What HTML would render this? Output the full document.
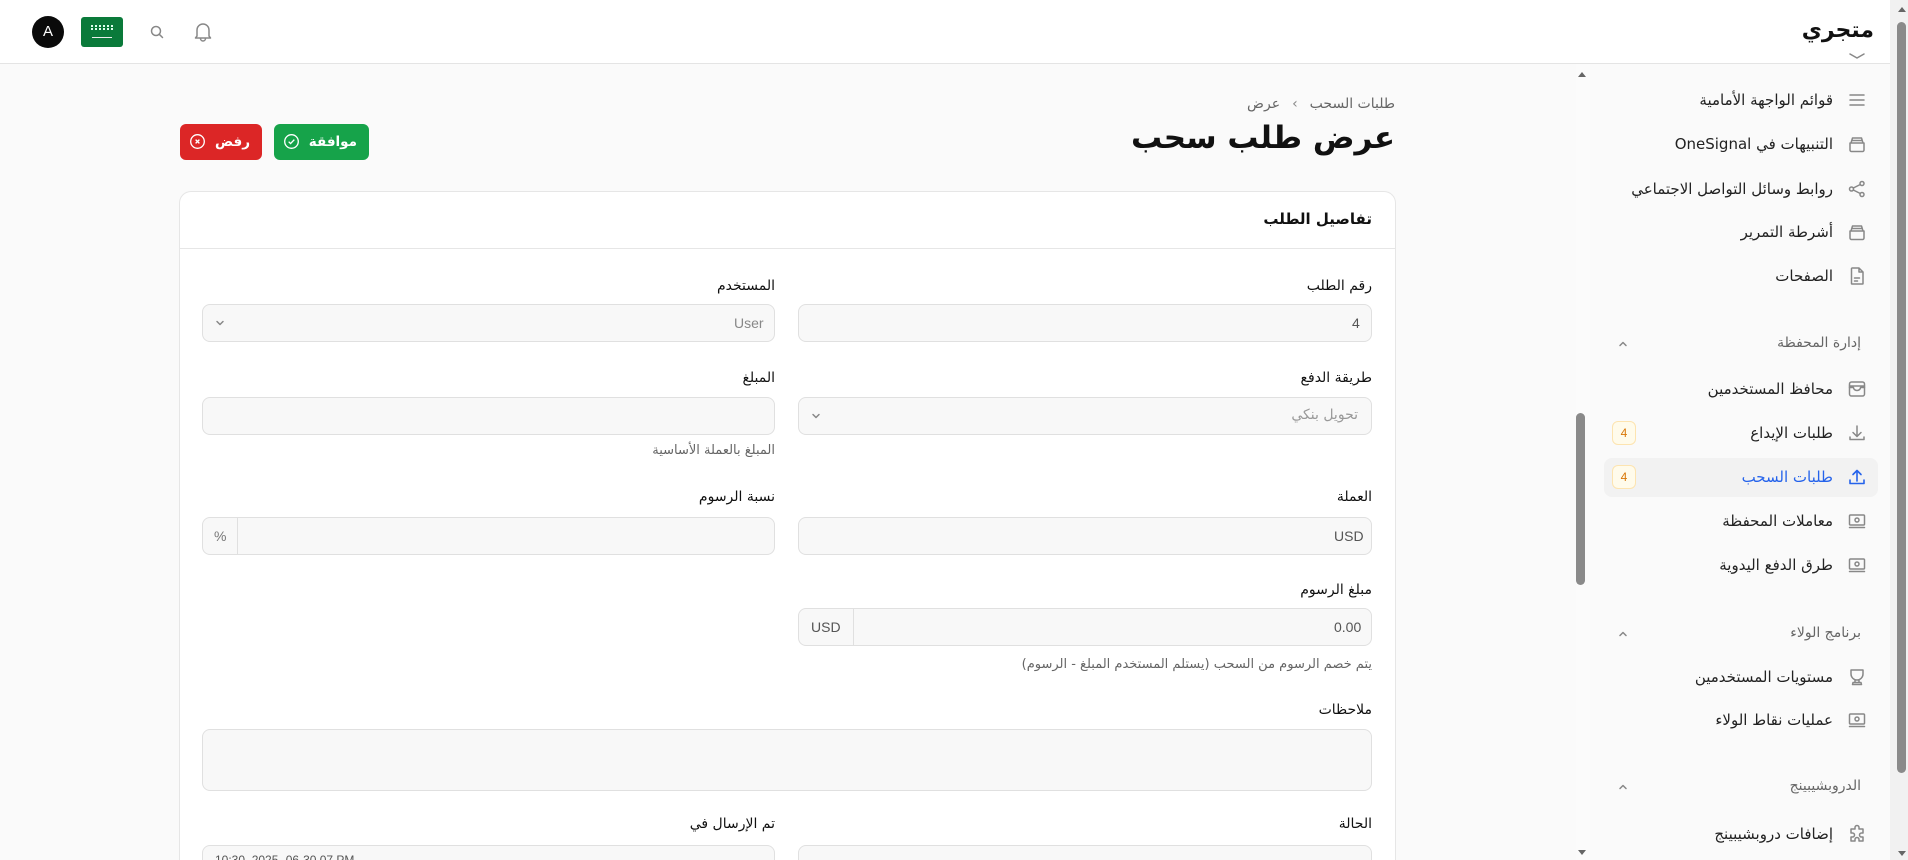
<!DOCTYPE html>
<html><head><meta charset="utf-8"><style>
*{box-sizing:border-box;margin:0;padding:0}
html,body{width:1908px;height:860px;overflow:hidden;background:#fafafa;font-family:"DejaVu Sans","Liberation Sans",sans-serif;color:#111}
.wrap{position:relative;width:1908px;height:860px;overflow:hidden}
.a{position:absolute}
.top{left:0;top:0;width:1890px;height:64px;background:#fff;border-bottom:1px solid #e4e4e4}
.rt{direction:rtl;text-align:right;white-space:nowrap}
.lbl{font-size:14px;color:#111}
.inp{background:#f8f8f8;border:1px solid #e0e0e0;border-radius:8px;height:38px}
.ph{font-size:14px;color:#777}
.help{font-size:13px;color:#666}
.si{font-size:15px;color:#222}
.grp{font-size:14px;color:#666}
.ic{stroke:#888;fill:none;stroke-width:1.5;stroke-linecap:round;stroke-linejoin:round}
.badge{width:24px;height:24px;border:1px solid #fde4b0;background:#fffbeb;border-radius:6px;color:#d97706;font-size:12px;text-align:center;line-height:22px;font-family:"Liberation Sans",sans-serif}
</style></head><body><div class="wrap">
<!-- top bar -->
<div class="a top"></div>
<div class="a" style="left:32px;top:16px;width:32px;height:32px;border-radius:50%;background:#0a0a0a;color:#fff;font:15px 'Liberation Sans',sans-serif;text-align:center;line-height:32px">A</div>
<div class="a" style="left:81px;top:17px;width:42px;height:30px;border-radius:3px;background:#0a7a3a"><div class="a" style="left:10px;top:8px;width:22px;height:5px;border-top:2px dotted #dfe;border-bottom:2px dotted #dfe"></div><div class="a" style="left:11px;top:20px;width:20px;height:1px;background:#eee"></div></div>
<svg class="a" style="left:149px;top:24px" width="16" height="16" viewBox="0 0 16 16"><circle cx="7" cy="7" r="4.5" class="ic" stroke-width="1.2"/><path d="M10.3 10.3L13.5 13.5" class="ic" stroke-width="1.2"/></svg>
<svg class="a" style="left:193px;top:21px" width="20" height="22" viewBox="0 0 20 22"><path d="M4 15V9a6 6 0 0 1 12 0v6l1.5 2h-15z M7.5 17.5a2.5 2.5 0 0 0 5 0" class="ic" stroke-width="1.3"/></svg>
<div class="a rt" style="right:34px;top:18px;font-size:22px;font-weight:bold;color:#111">متجري</div>

<!-- breadcrumb/title -->
<div class="a rt" style="right:513px;top:96px;font-size:14px;color:#666">طلبات السحب<span style="margin:0 12px;color:#888">›</span>عرض</div>
<div class="a rt" style="right:513px;top:120px;font-size:31px;font-weight:bold;color:#111">عرض طلب سحب</div>
<div class="a rt" style="left:274px;top:124px;width:95px;height:36px;background:#16a34a;border-radius:6px;color:#fff;font-size:13.5px;font-weight:bold;line-height:36px;padding-right:12px">موافقة <svg style="vertical-align:-4px;margin-right:4px" width="17" height="17" viewBox="0 0 18 18"><circle cx="9" cy="9" r="7.2" fill="none" stroke="#fff" stroke-width="1.4"/><path d="M6 9.2l2 2 4-4.2" fill="none" stroke="#fff" stroke-width="1.4"/></svg></div>
<div class="a rt" style="left:180px;top:124px;width:82px;height:36px;background:#dc2626;border-radius:6px;color:#fff;font-size:13.5px;font-weight:bold;line-height:36px;padding-right:12px">رفض <svg style="vertical-align:-4px;margin-right:4px" width="17" height="17" viewBox="0 0 18 18"><circle cx="9" cy="9" r="7.2" fill="none" stroke="#fff" stroke-width="1.4"/><path d="M7 7l4 4M11 7l-4 4" fill="none" stroke="#fff" stroke-width="1.4"/></svg></div>

<!-- card -->
<div class="a" style="left:179px;top:191px;width:1217px;height:669px;background:#fff;border:1px solid #e6e6e6;border-bottom:none;border-radius:12px 12px 0 0"></div>
<div class="a" style="left:180px;top:248px;width:1215px;height:1px;background:#e6e6e6"></div>
<div class="a rt" style="right:536px;top:210px;font-size:15px;font-weight:bold">تفاصيل الطلب</div>

<!-- right column -->
<div class="a rt lbl" style="right:536px;top:278px">رقم الطلب</div>
<div class="a inp" style="left:798px;top:304px;width:574px"></div>
<div class="a ph" style="left:1352px;top:315px;font-family:'Liberation Sans';color:#555">4</div>

<div class="a rt lbl" style="right:536px;top:370px">طريقة الدفع</div>
<div class="a inp" style="left:798px;top:397px;width:574px"></div>
<div class="a rt ph" style="right:550px;top:407px;color:#999">تحويل بنكي</div>
<svg class="a" style="left:810px;top:410px" width="12" height="12" viewBox="0 0 12 12"><path d="M3 4.5l3 3 3-3" class="ic"/></svg>

<div class="a rt lbl" style="right:536px;top:489px">العملة</div>
<div class="a inp" style="left:798px;top:517px;width:574px"></div>
<div class="a ph" style="left:1334px;top:528px;font-family:'Liberation Sans';color:#555">USD</div>

<div class="a rt lbl" style="right:536px;top:582px">مبلغ الرسوم</div>
<div class="a inp" style="left:798px;top:608px;width:574px"></div>
<div class="a" style="left:853px;top:609px;width:1px;height:36px;background:#e0e0e0"></div>
<div class="a ph" style="left:811px;top:619px;font-family:'Liberation Sans';color:#555">USD</div>
<div class="a ph" style="left:1334px;top:619px;font-family:'Liberation Sans';color:#555">0.00</div>
<div class="a rt help" style="right:536px;top:657px">يتم خصم الرسوم من السحب (يستلم المستخدم المبلغ - الرسوم)</div>

<div class="a rt lbl" style="right:536px;top:702px">ملاحظات</div>
<div class="a inp" style="left:202px;top:729px;width:1170px;height:62px"></div>

<div class="a rt lbl" style="right:536px;top:816px">الحالة</div>
<div class="a inp" style="left:798px;top:845px;width:574px"></div>
<div class="a rt lbl" style="right:1133px;top:816px">تم الإرسال في</div>
<div class="a inp" style="left:202px;top:845px;width:573px"></div>
<div class="a" style="left:215px;top:853px;font:12px 'Liberation Sans';color:#555">10:30 ,2025 -06-30 07 PM</div>

<!-- left column -->
<div class="a rt lbl" style="right:1133px;top:278px">المستخدم</div>
<div class="a inp" style="left:202px;top:304px;width:573px"></div>
<div class="a ph" style="left:734px;top:315px;font-family:'Liberation Sans';color:#888">User</div>
<svg class="a" style="left:214px;top:317px" width="12" height="12" viewBox="0 0 12 12"><path d="M3 4.5l3 3 3-3" class="ic"/></svg>

<div class="a rt lbl" style="right:1133px;top:370px">المبلغ</div>
<div class="a inp" style="left:202px;top:397px;width:573px"></div>
<div class="a rt help" style="right:1133px;top:443px">المبلغ بالعملة الأساسية</div>

<div class="a rt lbl" style="right:1133px;top:489px">نسبة الرسوم</div>
<div class="a inp" style="left:202px;top:517px;width:573px"></div>
<div class="a" style="left:237px;top:518px;width:1px;height:36px;background:#e0e0e0"></div>
<div class="a ph" style="left:214px;top:528px;font-family:'Liberation Sans';color:#777">%</div>

<!-- inner scrollbar -->
<div class="a" style="left:1576px;top:64px;width:14px;height:796px;background:#fbfbfb"></div>
<div class="a" style="left:1578px;top:68px;width:0;height:0;border:4px solid transparent;border-bottom:5px solid #666"></div>
<div class="a" style="left:1576px;top:413px;width:9px;height:172px;background:#8a8a8a;border-radius:5px"></div>
<div class="a" style="left:1578px;top:850px;width:0;height:0;border:4px solid transparent;border-top:5px solid #666"></div>

<!-- sidebar -->
<div class="a" style="left:1590px;top:64px;width:300px;height:796px;background:#fafafa"></div>
<svg class="a" style="left:1848px;top:52px" width="18" height="12" viewBox="0 0 18 12"><path d="M2 2l7 4 7-4" class="ic"/></svg>

<svg class="a" style="left:1847px;top:90px" width="20" height="20" viewBox="0 0 20 20"><path d="M3 5h14M3 10h14M3 15h14" class="ic"/></svg>
<div class="a rt si" style="right:75px;top:91px">قوائم الواجهة الأمامية</div>
<svg class="a" style="left:1847px;top:134px" width="20" height="20" viewBox="0 0 20 20"><path d="M3 9h14v7a1.5 1.5 0 0 1-1.5 1.5h-11A1.5 1.5 0 0 1 3 16zM4 9l1.5-5h9L16 9M5 6.5h10" class="ic"/></svg>
<div class="a rt si" style="right:75px;top:135px">التنبيهات في OneSignal</div>
<svg class="a" style="left:1847px;top:179px" width="20" height="20" viewBox="0 0 20 20"><circle cx="15" cy="4.5" r="2" class="ic"/><circle cx="4.5" cy="10" r="2" class="ic"/><circle cx="15" cy="15.5" r="2" class="ic"/><path d="M6.3 9l7-3.5M6.3 11l7 3.5" class="ic"/></svg>
<div class="a rt si" style="right:75px;top:180px">روابط وسائل التواصل الاجتماعي</div>
<svg class="a" style="left:1847px;top:222px" width="20" height="20" viewBox="0 0 20 20"><path d="M3 9h14v7a1.5 1.5 0 0 1-1.5 1.5h-11A1.5 1.5 0 0 1 3 16zM4 9l1.5-5h9L16 9M5 6.5h10" class="ic"/></svg>
<div class="a rt si" style="right:75px;top:223px">أشرطة التمرير</div>
<svg class="a" style="left:1847px;top:266px" width="20" height="20" viewBox="0 0 20 20"><path d="M5 2h7l4 4v11.5a.5.5 0 0 1-.5.5h-10.5a.5.5 0 0 1-.5-.5V2.5zM12 2v4h4M7.5 12h5M7.5 15h3" class="ic"/></svg>
<div class="a rt si" style="right:75px;top:267px">الصفحات</div>

<div class="a rt grp" style="right:47px;top:335px">إدارة المحفظة</div>
<svg class="a" style="left:1617px;top:338px" width="12" height="12" viewBox="0 0 12 12"><path d="M3 7.5l3-3 3 3" class="ic"/></svg>

<svg class="a" style="left:1847px;top:379px" width="20" height="20" viewBox="0 0 20 20"><rect x="2.5" y="3" width="15" height="14" rx="2" class="ic"/><path d="M2.5 7h15M2.5 8.5h4a3.5 3 0 0 0 7 0h4" class="ic"/></svg>
<div class="a rt si" style="right:75px;top:380px">محافظ المستخدمين</div>
<svg class="a" style="left:1847px;top:423px" width="20" height="20" viewBox="0 0 20 20"><path d="M10 3v10M6 9.5l4 4 4-4M3 14v2.5h14V14" class="ic"/></svg>
<div class="a rt si" style="right:75px;top:424px">طلبات الإيداع</div>
<div class="a badge" style="left:1612px;top:421px">4</div>

<div class="a" style="left:1604px;top:458px;width:274px;height:39px;background:#f2f2f2;border-radius:8px"></div>
<svg class="a" style="left:1847px;top:467px" width="20" height="20" viewBox="0 0 20 20"><path d="M10 14V3.5M6 7.5l4-4 4 4M3 13v3.5h14V13" fill="none" stroke="#2563eb" stroke-width="1.6" stroke-linecap="round" stroke-linejoin="round"/></svg>
<div class="a rt si" style="right:75px;top:468px;color:#2563eb">طلبات السحب</div>
<div class="a badge" style="left:1612px;top:465px">4</div>

<svg class="a" style="left:1847px;top:511px" width="20" height="20" viewBox="0 0 20 20"><rect x="2.5" y="4" width="15" height="10" rx="1" class="ic"/><circle cx="10" cy="9" r="2" class="ic"/><path d="M2.5 16.5h15" class="ic"/></svg>
<div class="a rt si" style="right:75px;top:512px">معاملات المحفظة</div>
<svg class="a" style="left:1847px;top:555px" width="20" height="20" viewBox="0 0 20 20"><rect x="2.5" y="4" width="15" height="10" rx="1" class="ic"/><circle cx="10" cy="9" r="2" class="ic"/><path d="M2.5 16.5h15" class="ic"/></svg>
<div class="a rt si" style="right:75px;top:556px">طرق الدفع اليدوية</div>

<div class="a rt grp" style="right:47px;top:625px">برنامج الولاء</div>
<svg class="a" style="left:1617px;top:628px" width="12" height="12" viewBox="0 0 12 12"><path d="M3 7.5l3-3 3 3" class="ic"/></svg>
<svg class="a" style="left:1847px;top:667px" width="20" height="20" viewBox="0 0 20 20"><path d="M4 3h12v4a6 6 0 0 1-12 0zM8 13v2M12 13v2M6 15.5h8l.5 2h-9z" class="ic"/></svg>
<div class="a rt si" style="right:75px;top:668px">مستويات المستخدمين</div>
<svg class="a" style="left:1847px;top:710px" width="20" height="20" viewBox="0 0 20 20"><rect x="2.5" y="4" width="15" height="10" rx="1" class="ic"/><circle cx="10" cy="9" r="2" class="ic"/><path d="M2.5 16.5h15" class="ic"/></svg>
<div class="a rt si" style="right:75px;top:711px">عمليات نقاط الولاء</div>

<div class="a rt grp" style="right:47px;top:778px">الدروبشيبينج</div>
<svg class="a" style="left:1617px;top:781px" width="12" height="12" viewBox="0 0 12 12"><path d="M3 7.5l3-3 3 3" class="ic"/></svg>
<svg class="a" style="left:1847px;top:824px" width="20" height="20" viewBox="0 0 20 20"><path d="M8 3.5a2 2 0 0 1 4 0V5h4v4h-1.5a2 2 0 0 0 0 4H16v4h-4v-1.5a2 2 0 0 0-4 0V17H4v-4h1.5a2 2 0 0 0 0-4H4V5h4z" class="ic"/></svg>
<div class="a rt si" style="right:75px;top:825px">إضافات دروبشيبينج</div>

<!-- outer scrollbar -->
<div class="a" style="left:1890px;top:0;width:18px;height:860px;background:#f1f1f1"></div>
<div class="a" style="left:1898px;top:3px;width:0;height:0;border:4px solid transparent;border-bottom:5px solid #666"></div>
<div class="a" style="left:1897px;top:22px;width:9px;height:751px;background:#8a8a8a;border-radius:5px"></div>
<div class="a" style="left:1898px;top:851px;width:0;height:0;border:4px solid transparent;border-top:5px solid #666"></div>
</div></body></html>
